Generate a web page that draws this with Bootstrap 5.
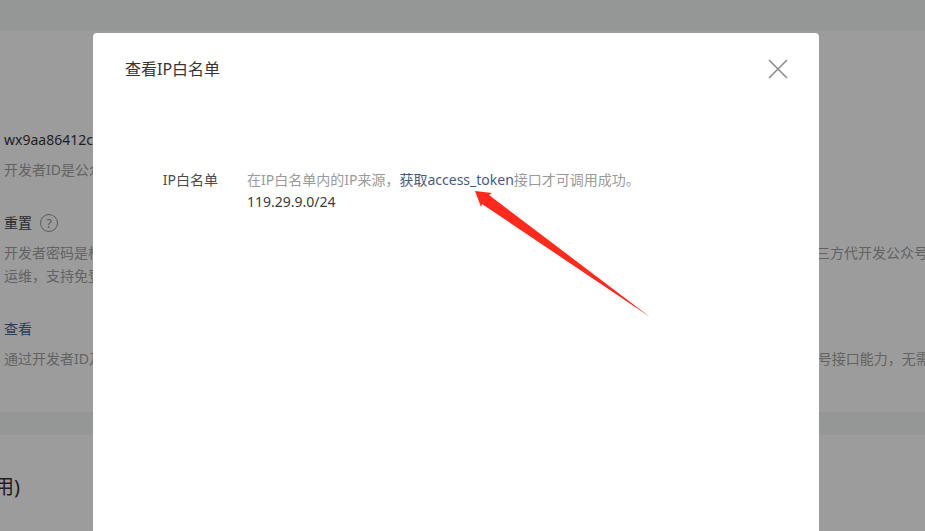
<!DOCTYPE html>
<html lang="zh"><head><meta charset="utf-8">
<link href="https://cdn.jsdelivr.net/npm/bootstrap@5.3.0/dist/css/bootstrap.min.css" rel="stylesheet">
<style>
html,body{height:531px;overflow:hidden}
body{background:#9c9c9c;font-family:"Noto Sans","Noto Sans CJK SC",sans-serif;font-size:14px;color:#2a2a2a}
.topstrip{height:31px;background:#959796}
.bgpanel{height:381px;padding:95px 0 0 4px;white-space:nowrap;overflow:hidden}
.bgline{line-height:22px;height:22px}
.appid{color:#1e1e1e;margin-top:3px}
.hint{color:#636363;margin-top:8px}
.hint2{color:#636363;margin-top:1px}
.act{color:#2a3b58}
.reset{margin-top:31px;color:#262b33}
.qmark{width:18px;height:18px;border:1px solid #5c5c5c;border-radius:50%;color:#5c5c5c;font-size:13px;line-height:16px;text-align:center;margin-left:8px;display:inline-block}
.view{margin-top:31px}
.midband{height:23px;background:#959796}
.bgtitle{font-size:20px;color:#1e1e1e;line-height:28px;margin:38px 0 0 -6px;white-space:nowrap}
.dialogbox{position:absolute;left:93px;top:33px;width:726px;height:498px;background:#fff;border-radius:4px 4px 0 0;overflow:hidden}
.dlghead{padding:24px 31px 0 32px;height:135px}
.dlgtitle{font-size:16px;line-height:24px;color:#353535}
.closex{width:20px;height:20px;margin-top:2px}
.fieldname{width:125px;text-align:right;color:#4b4b4b;line-height:22px;flex:none;margin-top:1px}
.fieldval{margin-left:29px;line-height:22px;padding-top:1px}
.tip{color:#9a9a9a}
.tip a{color:#465a86;text-decoration:none}
.ipval{color:#3b3b3b}
.arrowmark{position:absolute;left:0;top:0;width:925px;height:531px;pointer-events:none}
</style></head>
<body>
<div class="topstrip"></div>
<div class="bgpanel">
  <div class="bgline appid">wx9aa86412c0000000</div>
  <div class="bgline hint">开发者ID是公众号开发识别码，配合开发者密码可调用公众号的接口能力。</div>
  <div class="bgline reset d-flex align-items-center">重置<span class="qmark">?</span></div>
  <div class="bgline hint">开发者密码是校验公众号开发者身份的密码，具有极高的安全性。切记勿把密码直接交给第三方开发者或直接存储在代码中。如需第三方代开发公众号</div>
  <div class="bgline hint2">运维，支持免登录</div>
  <div class="bgline act view">查看</div>
  <div class="bgline hint">通过开发者ID及开发者密码调用获取access_token接口时，需要设置访问来源IP为白名单，通过白名单内的来源IP才可以调用本公众号接口能力，无需</div>
</div>
<div class="midband"></div>
<div class="bgtitle">用)</div>

<div class="dialogbox">
  <div class="dlghead d-flex justify-content-between align-items-start">
    <div class="dlgtitle">查看IP白名单</div>
    <svg class="closex" viewBox="0 0 20 20"><path d="M1 1L19 19M19 1L1 19" stroke="#8c8c8c" stroke-width="1.6" fill="none"/></svg>
  </div>
  <div class="d-flex">
    <div class="fieldname">IP白名单</div>
    <div class="fieldval">
      <div class="tip">在IP白名单内的IP来源，<a href="#">获取access_token</a>接口才可调用成功。</div>
      <div class="ipval">119.29.9.0/24</div>
    </div>
  </div>
</div>
<svg class="arrowmark" viewBox="0 0 925 531"><polygon points="475,191 492,193 489,195 650,317 482,204 481,207" fill="#ff2a1c"/></svg>
</body></html>
